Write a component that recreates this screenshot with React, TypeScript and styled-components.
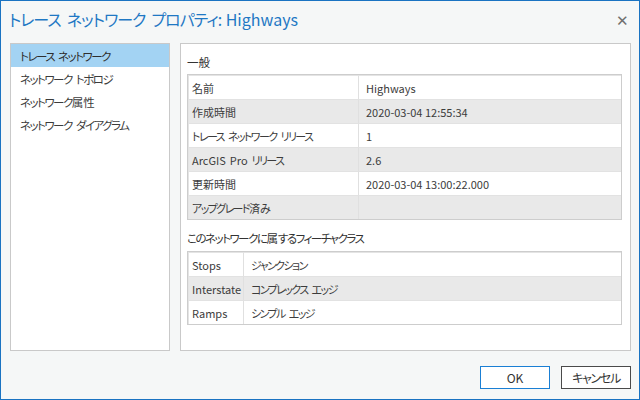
import React from 'react'
import styled, { createGlobalStyle } from 'styled-components'

const GlobalStyle = createGlobalStyle`
  html, body {
    margin: 0;
    padding: 0;
    background: #f5f7f7;
  }
  * {
    box-sizing: border-box;
  }
`

const font = `"Noto Sans CJK JP", "Noto Sans", sans-serif`

const Window = styled.div`
  width: 640px;
  height: 400px;
  border: 1px solid #1a73c2;
  background: #f5f7f7;
  display: flex;
  flex-direction: column;
  font-family: ${font};
  font-feature-settings: 'palt';
  color: #3c3c3c;
  font-size: 11px;
`

// kana in the original font (Meiryo UI) is much narrower than Noto's
const Kana = styled.span<{ $ls: number }>`
  letter-spacing: ${p => p.$ls}px;
`

const Sp = styled.span<{ $w: number }>`
  display: inline-block;
  width: ${p => p.$w}px;
`

const JP: React.FC<{ text: string; ls?: number; sp?: number }> = ({ text, ls = -1.6, sp = 4 }) => {
  const words = text.split(' ')
  return (
    <>
      {words.map((w, wi) => (
        <React.Fragment key={wi}>
          {wi > 0 && <Sp $w={sp} />}
          {(w.match(/[\u3040-\u30ff]+|[^\u3040-\u30ff]+/g) || []).map((t, i) =>
            /[\u3040-\u30ff]/.test(t) ? (
              <Kana key={i} $ls={ls}>
                {t}
              </Kana>
            ) : (
              <React.Fragment key={i}>{t}</React.Fragment>
            )
          )}
        </React.Fragment>
      ))}
    </>
  )
}

const TitleBar = styled.div`
  height: 42px;
  flex: none;
  display: flex;
  align-items: center;
  justify-content: space-between;
  padding: 0 10px 6px 8px;
`

const Title = styled.div`
  font-size: 16px;
  color: #1f78c4;
`

const Close = styled.div`
  font-size: 15px;
  color: #707070;
  line-height: 1;
`

const Body = styled.div`
  flex: none;
  height: 308px;
  display: flex;
  gap: 10px;
  padding: 0 8px 0 9px;
`

const Nav = styled.div`
  width: 160px;
  flex: none;
  background: #fff;
  border: 1px solid #c9c9c9;
  font-size: 11.5px;
`

const NavItem = styled.div<{ $active?: boolean }>`
  height: 23px;
  display: flex;
  align-items: center;
  padding-left: 9px;
  white-space: nowrap;
  background: ${p => (p.$active ? '#a3d3f3' : 'transparent')};
  color: ${p => (p.$active ? '#2e2e2e' : '#3c3c3c')};
`

const Content = styled.div`
  flex: 1;
  background: #fff;
  border: 1px solid #c9c9c9;
  padding: 0 8px 0 6px;
  display: flex;
  flex-direction: column;
`

const SectionTitle = styled.div<{ $h: number }>`
  height: ${p => p.$h}px;
  display: flex;
  align-items: center;
  padding-top: 5px;
  color: #333;
  font-size: 11.5px;
  white-space: nowrap;
`

const Table = styled.div<{ $cols: string }>`
  display: grid;
  grid-template-columns: ${p => p.$cols};
  border: 1px solid #cdcdcd;
`

const Cell = styled.div<{ $alt?: boolean; $first?: boolean; $pad: number }>`
  height: 24px;
  display: flex;
  align-items: center;
  padding-left: ${p => p.$pad}px;
  background: ${p => (p.$alt ? '#e9e9e9' : '#fff')};
  border-top: 1px solid ${p => (p.$first ? '#e4e4e4' : '#e2e2e2')};
  border-left: 1px solid #e4e4e4;
  white-space: nowrap;
  & + & {
    border-left: 1px solid #e0e0e0;
  }
`

const Row = styled.div`
  display: contents;
`

const Footer = styled.div`
  flex: 1;
  display: flex;
  justify-content: flex-end;
  align-items: flex-start;
  gap: 11px;
  padding: 15px 8px 0 0;
`

const Button = styled.button<{ $primary?: boolean }>`
  width: 70px;
  height: 23px;
  background: #fff;
  border: 1px solid ${p => (p.$primary ? '#1a7fd4' : '#4a4a4a')};
  font-family: ${font};
  font-feature-settings: 'palt';
  font-size: 12px;
  color: #333;
  padding: 0;
`

const general = [
  ['名前', 'Highways'],
  ['作成時間', '2020-03-04 12:55:34'],
  ['トレース ネットワーク リリース', '1'],
  ['ArcGIS Pro リリース', '2.6'],
  ['更新時間', '2020-03-04 13:00:22.000'],
  ['アップグレード済み', '']
]

const classes = [
  ['Stops', 'ジャンクション'],
  ['Interstate', 'コンプレックス エッジ'],
  ['Ramps', 'シンプル エッジ']
]

const navItems = ['トレース ネットワーク', 'ネットワーク トポロジ', 'ネットワーク属性', 'ネットワーク ダイアグラム']

export default function App() {
  return (
    <>
      <GlobalStyle />
      <Window>
        <TitleBar>
          <Title>
            <JP text="トレース ネットワーク プロパティ:" ls={-1} sp={6} /> Highways
          </Title>
          <Close>✕</Close>
        </TitleBar>
        <Body>
          <Nav>
            {navItems.map((n, i) => (
              <NavItem key={n} $active={i === 0}>
                <JP text={n} ls={-1.5} />
              </NavItem>
            ))}
          </Nav>
          <Content>
            <SectionTitle $h={30}>一般</SectionTitle>
            <Table $cols="170px 1fr">
              {general.map(([k, v], i) => (
                <Row key={k}>
                  <Cell $alt={i % 2 === 1} $first={i === 0} $pad={3}>
                    <JP text={k} />
                  </Cell>
                  <Cell $alt={i % 2 === 1} $first={i === 0} $pad={7}>
                    {v}
                  </Cell>
                </Row>
              ))}
            </Table>
            <SectionTitle $h={31}>
              <JP text="このネットワークに属するフィーチャクラス" ls={-1.5} />
            </SectionTitle>
            <Table $cols="55px 1fr">
              {classes.map(([k, v], i) => (
                <Row key={k}>
                  <Cell $alt={i % 2 === 1} $first={i === 0} $pad={3}>
                    {k}
                  </Cell>
                  <Cell $alt={i % 2 === 1} $first={i === 0} $pad={7}>
                    <JP text={v} />
                  </Cell>
                </Row>
              ))}
            </Table>
          </Content>
        </Body>
        <Footer>
          <Button $primary>OK</Button>
          <Button>
            <JP text="キャンセル" ls={-1.3} />
          </Button>
        </Footer>
      </Window>
    </>
  )
}
